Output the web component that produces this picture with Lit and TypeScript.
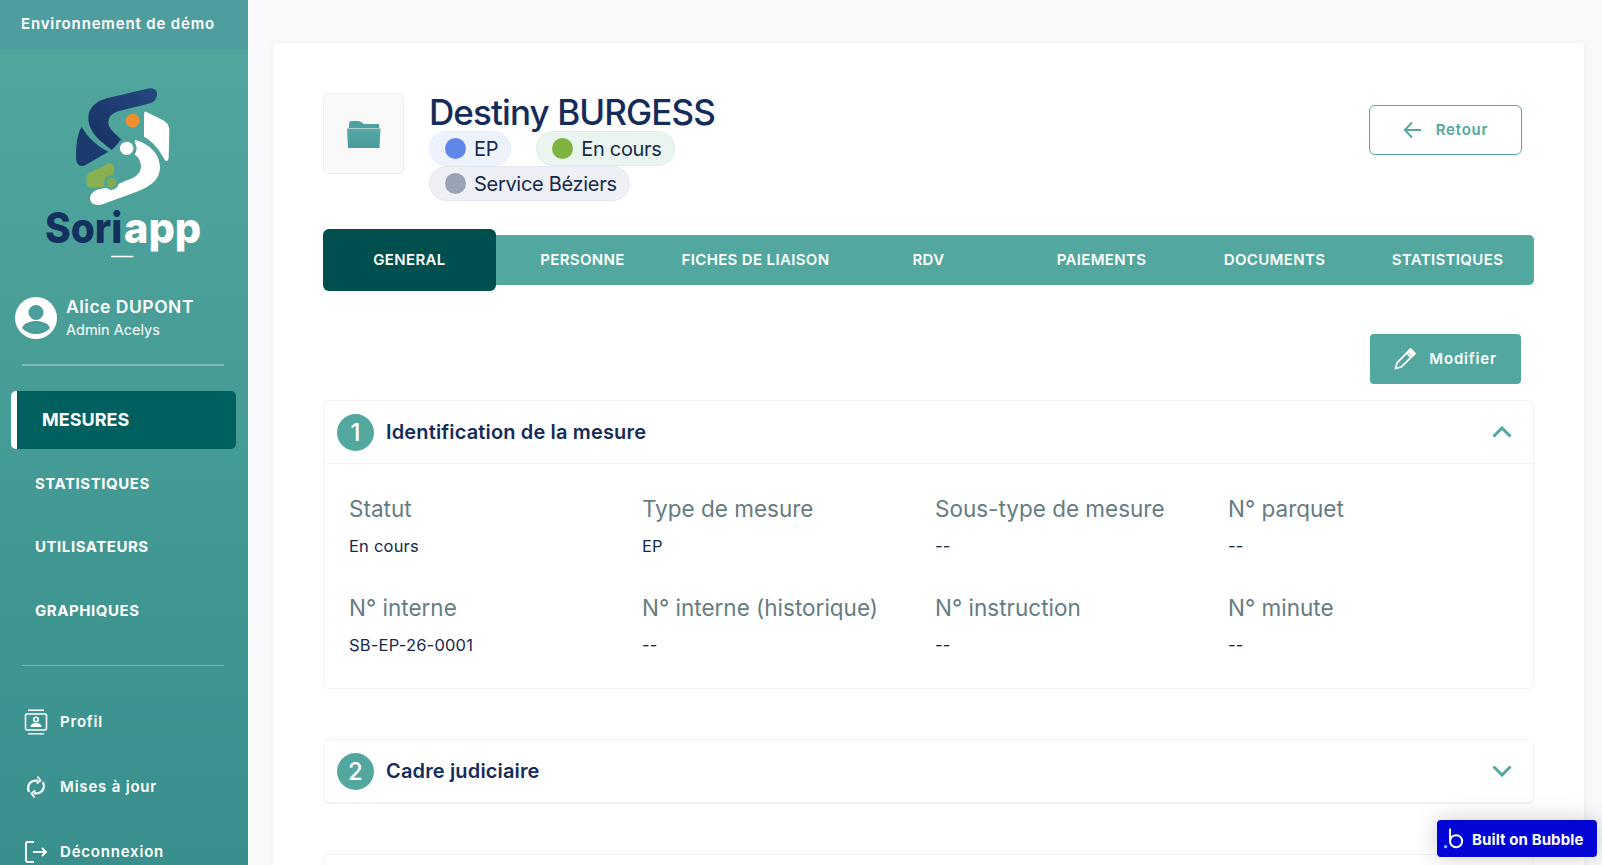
import {LitElement, html, css, svg} from 'lit';
import {customElement} from 'lit/decorators.js';

const logo = svg`
  <svg class="logo" viewBox="0 0 540 570" width="180" height="190">
    <defs>
      <linearGradient id="navy" x1="0" y1="1" x2="1" y2="0">
        <stop offset="0" stop-color="#172f62"/>
        <stop offset="1" stop-color="#24487f"/>
      </linearGradient>
    </defs>
    <path fill="url(#navy)" d="M328 25 C345 22 355 35 350 50 C346 62 338 68 325 71 L240 92 C218 98 205 108 205 128 C205 145 225 160 245 180 L215 210 L190 190 C165 170 145 145 145 115 C145 85 165 65 200 55 Z"/>
    <path fill="#1b3a6e" d="M125 140 C110 165 108 200 108 235 C110 255 120 262 135 256 L205 215 C175 200 145 175 125 140 Z"/>
    <path fill="#fff" d="M318 95 L368 120 C382 128 388 138 388 152 L386 232 C385 246 378 246 372 236 C360 212 340 185 312 170 L312 105 C312 97 314 94 318 95 Z"/>
    <path fill="#fff" d="M285 180 C325 190 360 220 360 262 C360 295 335 320 290 335 L190 372 C170 380 150 372 150 355 C150 342 162 332 178 328 L225 318 C245 305 270 300 288 288 C308 275 310 240 282 222 Z"/>
    <path fill="#8bb04f" d="M152 277 L205 251 C215 247 221 253 221 262 L218 295 C205 300 195 308 190 321 L155 323 C145 323 140 316 140 305 L140 292 C140 285 145 280 152 277 Z"/>
    <circle cx="278" cy="122" r="21" fill="#f08e2f"/>
    <circle cx="260" cy="205" r="30" fill="#4fa59c"/>
    <circle cx="260" cy="205" r="20" fill="#fff"/>
    <circle cx="214" cy="308" r="22" fill="#4fa59c"/>
    <circle cx="214" cy="308" r="14" fill="#86ad4c"/>
    <text class="logo-text" x="15" y="490" fill="#13305f" textLength="232" lengthAdjust="spacingAndGlyphs">Sori</text>
    <text class="logo-text" x="252" y="490" fill="#fff" textLength="232" lengthAdjust="spacingAndGlyphs">app</text>
    <rect x="213" y="527" width="67" height="5" rx="2" fill="#fff"/>
  </svg>`;

const icons = {
  profil: svg`<svg viewBox="0 0 24 26" width="24" height="26" fill="none" stroke="#fff" stroke-width="1.6"><path d="M4 1.2h16M4 24.8h16"/><rect x="1.5" y="5" width="21" height="16" rx="1.5"/><circle cx="12" cy="10.5" r="2.2"/><path d="M6.5 18c0-3 2.500-4 5.500-4s5.500 1 5.500 4z" fill="#fff" stroke="none"/></svg>`,
  sync: svg`<svg viewBox="0 0 24 24" width="24" height="24" fill="none" stroke="#fff" stroke-width="2.2"><path d="M5 17C2.800 12.500 4.500 7 10 5.800c2-.4 3-.3 4 0"/><path d="M19 7c2.200 4.500.5 10-5 11.200-2 .4-3 .3-4 0"/><path d="M13.500 1.500l3 4-3.800 3" stroke-width="1.800"/><path d="M10.500 22.500l-3-4 3.800-3" stroke-width="1.800"/></svg>`,
  logout: svg`<svg viewBox="0 0 24 24" width="24" height="24" fill="none" stroke="#fff" stroke-width="1.8"><path d="M10 2H3.500A1.500 1.500 0 0 0 2 3.500v17A1.500 1.500 0 0 0 3.500 22H10"/><path d="M9 12h13M18 8l4 4-4 4"/></svg>`,
  folder: svg`<svg viewBox="0 0 34 28" width="34" height="28"><defs><linearGradient id="f" x1="0" y1="0" x2="0" y2="1"><stop offset="0" stop-color="#57aaa6"/><stop offset="1" stop-color="#479a98"/></linearGradient></defs><path fill="#4f9fa0" d="M2 4a3 3 0 0 1 3-3h6c3 0 4 2 6 3h15v4H2z"/><path fill="url(#f)" d="M0 8.500h33.500L32.500 28H1z"/></svg>`,
  back: svg`<svg viewBox="0 0 20 18" width="20" height="18" fill="none" stroke="#52a89e" stroke-width="1.900"><path d="M18 9H2M9 1.500L1.800 9 9 16.500"/></svg>`,
  pencil: svg`<svg viewBox="0 0 20 20" width="22" height="22" fill="none" stroke="#fff" stroke-width="1.600"><path d="M1.500 18.500l1.200-5L13 3l4 4L6.500 17.300z"/><path d="M11.500 4.500l4 4"/><path d="M15 .8l4.200 4.200-1.500 1.500-4.200-4.200z" fill="#fff"/></svg>`,
  up: svg`<svg viewBox="0 0 20 12" width="20" height="12" fill="none" stroke="#52a89e" stroke-width="3"><path d="M1.500 10.500L10 2l8.500 8.500"/></svg>`,
  down: svg`<svg viewBox="0 0 20 12" width="20" height="12" fill="none" stroke="#52a89e" stroke-width="3"><path d="M1.500 1.500L10 10l8.500-8.500"/></svg>`,
  bubble: svg`<svg viewBox="0 0 20 20" width="22" height="22" fill="none" stroke="#fff" stroke-width="1.800"><path d="M5.500 .5v12"/><circle cx="11" cy="12" r="5.500"/><circle cx="1.500" cy="17" r="1.500" fill="#7fc4ff" stroke="none"/></svg>`,
};

@customElement('app-root')
export class AppRoot extends LitElement {
  static styles = css`
    :host {
      display: block;
      height: 865px;
      overflow: hidden;
      position: relative;
      background: #f7f9fb;
      font-family: "Inter", "Liberation Sans", sans-serif;
      color: #16294f;
    }
    * { box-sizing: border-box; }

    .page { display: flex; height: 865px; }

    /* sidebar */
    .sidebar {
      width: 248px;
      flex: none;
      display: flex;
      flex-direction: column;
      overflow: hidden;
      color: #fff;
      background: linear-gradient(180deg, #52a89e 0%, #388f8c 100%);
    }
    .banner {
      height: 50px;
      flex: none;
      padding: 0 0 4px 21px;
      display: flex;
      align-items: center;
      background: #4f9e9f;
      font-size: 15px;
      font-weight: 600;
      letter-spacing: 0.85px;
    }
    .logo-wrap { height: 221px; padding: 30px 0 0 40px; flex: none; }
    .logo { display: block; }
    .logo-text { font-family: "Inter", sans-serif; font-size: 128px; font-weight: 800; }
    .user { display: flex; align-items: center; gap: 9px; padding: 0 0 0 15px; height: 93px; flex: none; }
    .avatar { width: 42px; height: 42px; flex: none; }
    .user-name { font-size: 17.500px; font-weight: 600; letter-spacing: 0.5px; line-height: 24px; }
    .user-role { font-size: 14.500px; line-height: 22px; }
    .sep { height: 1.5px; margin: 0 24px 0 22px; flex: none; background: rgba(255, 255, 255, 0.3); }
    .sep.thin { height: 1px; }
    .active-item {
      margin: 25px 12px 0 11px;
      height: 58px;
      border-left: 6px solid #fff;
      border-radius: 5px;
      background: #00605f;
      padding-left: 25px;
      display: flex;
      align-items: center;
      font-size: 18px;
      font-weight: 700;
      flex: none;
    }
    .nav-list { display: flex; flex-direction: column; padding: 3px 0 23px; flex: none; }
    .nav-item {
      height: 63.500px;
      padding-left: 35px;
      display: flex;
      align-items: center;
      font-size: 15px;
      font-weight: 700;
      letter-spacing: 0.55px;
    }
    .bottom { padding-top: 23px; flex: none; }
    .bottom-item {
      height: 65px;
      padding-left: 24px;
      display: flex;
      align-items: center;
      gap: 12px;
      font-size: 15px;
      font-weight: 600;
      letter-spacing: 0.8px;
    }
    .bottom-item svg { flex: none; }

    /* main card */
    .main { flex: 1; min-width: 0; padding: 43px 18px 0 25px; }
    .card {
      background: #fff;
      border-radius: 4px;
      padding: 50px 50px 0;
      box-shadow: 0 0 6px rgba(40, 70, 100, 0.05);
      height: 900px;
    }
    .head { display: flex; height: 136px; }
    .folder {
      width: 81px;
      height: 81px;
      flex: none;
      display: flex;
      align-items: center;
      justify-content: center;
      background: #f9f9f9;
      border: 1px solid #f0f0f0;
      border-radius: 5px;
    }
    .head-info { margin-left: 25px; width: 300px; }
    h1 {
      margin: 0;
      font-size: 35px;
      line-height: 38px;
      font-weight: 500;
      letter-spacing: -0.9px;
      white-space: nowrap;
      color: #152c5b;
    }
    .chips { display: flex; flex-wrap: wrap; column-gap: 25px; }
    .chip {
      height: 35px;
      padding: 0 12px 0 15px;
      display: flex;
      align-items: center;
      gap: 8px;
      border-radius: 18px;
      border: 1px solid transparent;
      font-size: 20px;
      letter-spacing: -0.3px;
      white-space: nowrap;
    }
    .dot { width: 21px; height: 21px; border-radius: 50%; flex: none; }
    .chip.blue { background: #edf2fd; border-color: #e6edfa; }
    .chip.green { background: #e9f5ee; border-color: #e0efe6; }
    .chip.grey { background: #eef0f6; border-color: #e5e8f0; }
    .btn-back {
      margin: 12px 12px 0 auto;
      width: 153px;
      height: 50px;
      display: flex;
      align-items: center;
      justify-content: center;
      gap: 13px;
      padding-bottom: 1px;
      border: 1px solid #52a89e;
      border-radius: 6px;
      color: #52a89e;
      font-size: 15px;
      font-weight: 600;
      letter-spacing: 0.8px;
    }
    .tabs {
      display: grid;
      grid-template-columns: repeat(7, 1fr);
      height: 50px;
      margin-top: 6px;
      border-radius: 5px;
      background: #52a89e;
      color: #fff;
      font-size: 15px;
      font-weight: 600;
      letter-spacing: 0.35px;
    }
    .tab { display: flex; align-items: center; justify-content: center; white-space: nowrap; padding-bottom: 1px; }
    .tab.on { margin: -6px 0; background: #004f4f; border-radius: 6px; }
    .actions { display: flex; justify-content: flex-end; margin-top: 49px; padding-right: 13px; }
    .btn-edit {
      width: 151px;
      height: 50px;
      display: flex;
      align-items: center;
      justify-content: center;
      gap: 13px;
      padding-bottom: 1px;
      background: #52a89e;
      border-radius: 4px;
      color: #fff;
      font-size: 15px;
      font-weight: 600;
      letter-spacing: 0.8px;
    }
    .section {
      margin-top: 16px;
      border: 1px solid #f1f2f6;
      border-radius: 6px;
      background: #fff;
    }
    .section + .section { margin-top: 50px; border-bottom-width: 2px; }
    .sec-head {
      height: 62px;
      display: flex;
      align-items: center;
      gap: 12px;
      padding: 0 21px 0 13px;
    }
    .sec-num {
      width: 37px;
      height: 37px;
      flex: none;
      border-radius: 50%;
      background: #52a89e;
      color: #fff;
      font-size: 24px;
      font-weight: 500;
      display: flex;
      align-items: center;
      justify-content: center;
    }
    .sec-title { flex: 1; font-size: 20px; font-weight: 600; letter-spacing: 0.15px; color: #152c5b; }
    .fields {
      border-top: 1px solid #f1f2f6;
      display: grid;
      grid-template-columns: repeat(4, 293px);
      grid-auto-rows: 99px;
      padding: 26px 25px 0;
      height: 225px;
    }
    .f-label { font-size: 22.500px; line-height: 38px; color: #667c80; white-space: nowrap; }
    .f-value { font-size: 16.500px; line-height: 36px; letter-spacing: 0.2px; color: #16294f; }

    .bubble {
      position: absolute;
      left: 1437px;
      top: 820px;
      width: 160px;
      height: 37px;
      display: flex;
      align-items: center;
      gap: 6px;
      padding: 1px 0 0 7px;
      background: #0205d3;
      border-radius: 4px;
      color: #fff;
      font-size: 15px;
      font-weight: 700;
      letter-spacing: 0.1px;
      box-shadow: 0 0 24px rgba(0, 0, 0, 0.2);
    }
  `;

  tabs = ['GENERAL', 'PERSONNE', 'FICHES DE LIAISON', 'RDV', 'PAIEMENTS', 'DOCUMENTS', 'STATISTIQUES'];

  fields = [
    ['Statut', 'En cours'],
    ['Type de mesure', 'EP'],
    ['Sous-type de mesure', '--'],
    ['N° parquet', '--'],
    ['N° interne', 'SB-EP-26-0001'],
    ['N° interne (historique)', '--'],
    ['N° instruction', '--'],
    ['N° minute', '--'],
  ];

  render() {
    return html`
      <div class="page">
        <aside class="sidebar">
          <div class="banner">Environnement de démo</div>
          <div class="logo-wrap">${logo}</div>
          <div class="user">
            <svg class="avatar" viewBox="0 0 42 42">
              <circle cx="21" cy="21" r="21" fill="#fff"/>
              <circle cx="21" cy="15.500" r="7.500" fill="#4a9f9c"/>
              <path d="M7 31c2-5 8-7 14-7s12 2 14 7c-3.500 4-8.500 6-14 6S10.500 35 7 31z" fill="#4a9f9c"/>
            </svg>
            <div>
              <div class="user-name">Alice DUPONT</div>
              <div class="user-role">Admin Acelys</div>
            </div>
          </div>
          <div class="sep"></div>
          <div class="active-item">MESURES</div>
          <div class="nav-list">
            <div class="nav-item">STATISTIQUES</div>
            <div class="nav-item">UTILISATEURS</div>
            <div class="nav-item">GRAPHIQUES</div>
          </div>
          <div class="sep thin"></div>
          <div class="bottom">
            <div class="bottom-item">${icons.profil}Profil</div>
            <div class="bottom-item">${icons.sync}Mises à jour</div>
            <div class="bottom-item">${icons.logout}Déconnexion</div>
          </div>
        </aside>

        <main class="main">
          <div class="card">
            <div class="head">
              <div class="folder">${icons.folder}</div>
              <div class="head-info">
                <h1>Destiny BURGESS</h1>
                <div class="chips">
                  <div class="chip blue"><span class="dot" style="background:#5f86e8"></span>EP</div>
                  <div class="chip green"><span class="dot" style="background:#7fb341"></span>En cours</div>
                  <div class="chip grey"><span class="dot" style="background:#9aa3b5"></span>Service Béziers</div>
                </div>
              </div>
              <div class="btn-back">${icons.back}Retour</div>
            </div>

            <div class="tabs">
              ${this.tabs.map((t, i) => html`<div class="tab ${i === 0 ? 'on' : ''}">${t}</div>`)}
            </div>

            <div class="actions">
              <div class="btn-edit">${icons.pencil}Modifier</div>
            </div>

            <section class="section">
              <div class="sec-head">
                <div class="sec-num">1</div>
                <div class="sec-title">Identification de la mesure</div>
                ${icons.up}
              </div>
              <div class="fields">
                ${this.fields.map(([label, value]) => html`
                  <div>
                    <div class="f-label">${label}</div>
                    <div class="f-value">${value}</div>
                  </div>`)}
              </div>
            </section>

            <section class="section">
              <div class="sec-head">
                <div class="sec-num">2</div>
                <div class="sec-title">Cadre judiciaire</div>
                ${icons.down}
              </div>
            </section>

            <section class="section">
              <div class="sec-head"></div>
            </section>
          </div>
        </main>
      </div>
      <div class="bubble">${icons.bubble}Built on Bubble</div>
    `;
  }
}
